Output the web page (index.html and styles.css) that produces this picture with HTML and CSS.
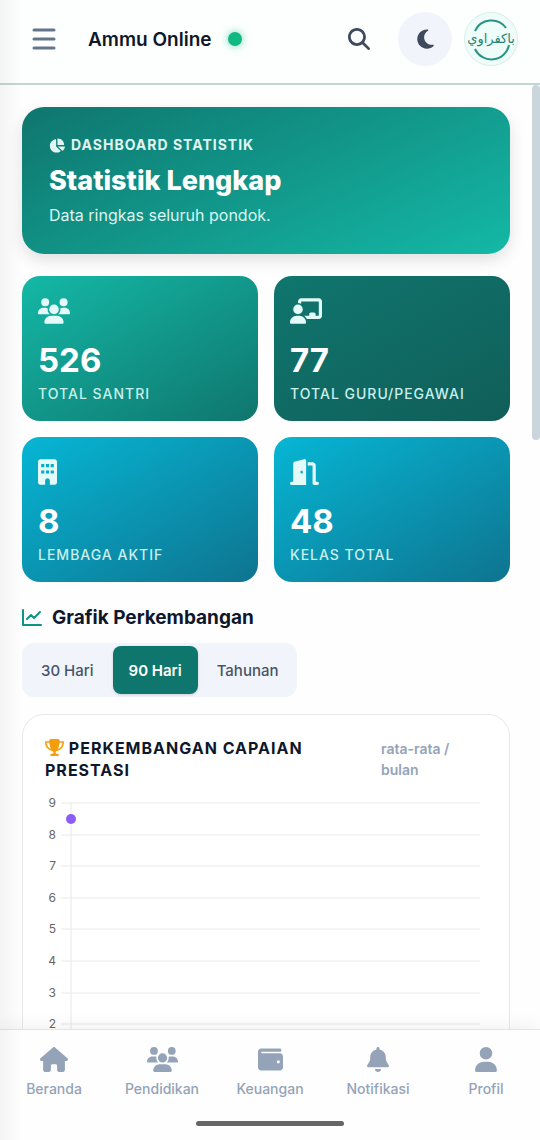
FILE: index.html
```html
<!DOCTYPE html>
<html lang="id">
<head>
  <meta charset="UTF-8">
  <meta name="viewport" content="width=device-width, initial-scale=1.0">
  <title>Ammu Online - Dashboard Statistik</title>
  <link rel="stylesheet" href="styles.css">
</head>
<body>
  <header class="topbar">
    <button class="menu-btn" aria-label="Buka menu">
      <svg viewBox="0 0 24 22" width="24" height="22"><path d="M2 2H22M2 11H22M2 20H22" stroke="currentColor" stroke-width="3" stroke-linecap="round"/></svg>
    </button>
    <div class="brand">Ammu Online <span class="status-dot"></span></div>
    <div class="topbar-actions">
      <button class="round-btn" aria-label="Cari">
        <svg viewBox="0 0 512 512" width="22" height="22"><path d="M416 208c0 45.9-14.9 88.3-40 122.7L502.6 457.4c12.5 12.5 12.5 32.8 0 45.3s-32.8 12.5-45.3 0L330.7 376c-34.4 25.2-76.8 40-122.7 40C93.1 416 0 322.9 0 208S93.1 0 208 0S416 93.1 416 208zM208 352a144 144 0 1 0 0-288 144 144 0 1 0 0 288z"/></svg>
      </button>
      <button class="round-btn filled" aria-label="Mode gelap">
        <svg viewBox="0 0 384 512" width="17" height="22"><path d="M223.5 32C100 32 0 132.3 0 256S100 480 223.5 480c60.6 0 115.5-24.2 155.8-63.4c5-4.9 6.3-12.5 3.1-18.7s-10.1-9.7-17-8.5c-9.8 1.7-19.8 2.6-30.1 2.6c-96.9 0-175.5-78.8-175.5-176c0-65.8 36-123.1 89.3-153.3c6.1-3.5 9.2-10.5 7.7-17.3s-7.3-11.9-14.3-12.5c-6.3-.5-12.6-.8-19-.8z"/></svg>
      </button>
      <a href="#profil" class="avatar" aria-label="Profil">
        <svg viewBox="0 0 54 54" width="54" height="54">
          <path d="M11 19A18 18 0 0 1 42 16M11 37A18 18 0 0 0 45 33" fill="none" stroke="#2a9483" stroke-width="2"/>
          <text x="27" y="31" text-anchor="middle" class="avatar-text">باكفراوي</text>
        </svg>
      </a>
    </div>
  </header>

  <div class="scroller">
    <main class="content">
      <section class="hero">
        <p class="hero-label">
          <svg viewBox="0 0 576 512" width="16" height="15"><path d="M304 240V16.6c0-9 7-16.6 16-16.6C443.7 0 544 100.3 544 224c0 9-7.6 16-16.6 16H304zM32 272C32 150.7 122.1 50.3 239 34.3c9.2-1.3 17 6.1 17 15.4V288L412.5 444.5c6.7 6.7 6.2 17.7-1.5 23.1C371.8 495.6 323.8 512 272 512C139.5 512 32 404.6 32 272zm526.4 16c9.3 0 16.6 7.8 15.4 17c-7.7 55.9-34.6 105.6-73.9 142.3c-6 5.6-15.4 5.2-21.2-.7L320 288H558.4z"/></svg>
          DASHBOARD STATISTIK
        </p>
        <h1>Statistik Lengkap</h1>
        <p class="hero-desc">Data ringkas seluruh pondok.</p>
      </section>

      <section class="stats">
        <div class="stat santri">
          <div class="stat-icon"><svg viewBox="0 0 640 512" width="32" height="26"><path d="M144 0a80 80 0 1 1 0 160A80 80 0 1 1 144 0zM512 0a80 80 0 1 1 0 160A80 80 0 1 1 512 0zM0 298.7C0 239.8 47.8 192 106.7 192h42.7c15.9 0 31 3.5 44.6 9.7c-1.3 7.2-1.9 14.7-1.9 22.3c0 38.2 16.8 72.5 43.3 96c-.2 0-.4 0-.7 0H21.3C9.6 320 0 310.4 0 298.7zM405.3 320c-.2 0-.4 0-.7 0c26.6-23.5 43.3-57.8 43.3-96c0-7.6-.7-15-1.9-22.3c13.6-6.3 28.7-9.7 44.6-9.7h42.7C592.2 192 640 239.8 640 298.7c0 11.8-9.6 21.3-21.3 21.3H405.3zM224 224a96 96 0 1 1 192 0 96 96 0 1 1 -192 0zM128 485.3C128 411.7 187.7 352 261.3 352H378.7C452.3 352 512 411.7 512 485.3c0 14.7-11.9 26.7-26.7 26.7H154.7c-14.7 0-26.7-11.9-26.7-26.7z"/></svg></div>
          <strong>526</strong>
          <span>TOTAL SANTRI</span>
        </div>
        <div class="stat guru">
          <div class="stat-icon"><svg viewBox="0 0 640 512" width="32" height="26"><path d="M160 64c0-35.3 28.7-64 64-64H576c35.3 0 64 28.7 64 64V352c0 35.3-28.7 64-64 64H336.8c-11.8-25.5-29.9-47.5-52.4-64H384V320c0-17.7 14.3-32 32-32h64c17.700 0 32 14.300 32 32v32h64V64L224 64v49.100C205.200 102.200 183.300 96 160 96V64zm0 64a96 96 0 1 1 0 192 96 96 0 1 1 0-192zM133.300 352h53.300C260.300 352 320 411.700 320 485.300c0 14.700-11.900 26.700-26.700 26.700H26.700C11.900 512 0 500.100 0 485.300C0 411.700 59.700 352 133.300 352z"/></svg></div>
          <strong>77</strong>
          <span>TOTAL GURU/PEGAWAI</span>
        </div>
        <div class="stat lembaga">
          <div class="stat-icon"><svg viewBox="0 0 384 512" width="19" height="26"><path fill-rule="evenodd" d="M48 0C21.500 0 0 21.500 0 48V464c0 26.500 21.500 48 48 48h96V432c0-26.500 21.500-48 48-48s48 21.500 48 48v80h96c26.500 0 48-21.500 48-48V48c0-26.500-21.500-48-48-48H48zM64 96h64v64H64zM160 96h64v64h-64zM256 96h64v64h-64zM64 224h64v64H64zM160 224h64v64h-64zM256 224h64v64h-64z"/></svg></div>
          <strong>8</strong>
          <span>LEMBAGA AKTIF</span>
        </div>
        <div class="stat kelas">
          <div class="stat-icon"><svg viewBox="0 0 576 512" width="29" height="26"><path d="M320 32c0-9.900-4.500-19.200-12.300-25.200S289.800-1.400 280.200 1l-179.900 45C79 51.300 64 70.500 64 92.500V448H32c-17.700 0-32 14.300-32 32s14.300 32 32 32H96 288h32V480 32zM256 256c0 17.700-10.700 32-24 32s-24-14.300-24-32s10.700-32 24-32s24 14.300 24 32zm96-128h96V480c0 17.700 14.300 32 32 32h64c17.700 0 32-14.300 32-32s-14.300-32-32-32H512V128c0-35.300-28.700-64-64-64H352v64z"/></svg></div>
          <strong>48</strong>
          <span>KELAS TOTAL</span>
        </div>
      </section>

      <h2 class="section-title">
        <svg viewBox="0 0 20 18" width="20" height="18"><path d="M1 1V16H19M5 10L9 6L12 9L18 3" fill="none" stroke="currentColor" stroke-width="2" stroke-linecap="round" stroke-linejoin="round"/></svg>
        Grafik Perkembangan
      </h2>

      <div class="range-tabs">
        <button>30 Hari</button>
        <button class="active">90 Hari</button>
        <button>Tahunan</button>
      </div>

      <section class="chart-card">
        <div class="chart-head">
          <h3><svg viewBox="0 0 576 512" width="19" height="17"><path d="M400 0H176c-26.500 0-48.100 21.800-47.100 48.200c.2 5.300 .4 10.600 .7 15.800H24C10.700 64 0 74.700 0 88c0 92.600 33.500 157 78.500 200.700c44.300 43.100 98.300 64.800 138.100 75.800c23.400 6.500 39.400 26 39.400 45.600c0 20.900-17 37.900-37.900 37.900H192c-17.700 0-32 14.300-32 32s14.300 32 32 32H384c17.700 0 32-14.300 32-32s-14.300-32-32-32H357.900C337 448 320 431 320 410.100c0-19.600 15.900-39.200 39.400-45.600c39.900-11 93.900-32.700 138.200-75.800C542.500 245 576 180.600 576 88c0-13.300-10.700-24-24-24H446.400c.3-5.200 .5-10.400 .7-15.800C448.100 21.800 426.500 0 400 0zM48.900 112h84.400c9.100 90.100 29.200 150.300 51.900 190.600c-24.900-11-50.800-26.500-73.200-48.300c-32-31.100-58-76-63-142.300zM464.100 254.300c-22.400 21.800-48.300 37.300-73.200 48.300c22.700-40.300 42.800-100.500 51.900-190.600h84.400c-5.100 66.300-31.100 111.200-63 142.300z"/></svg> PERKEMBANGAN CAPAIAN PRESTASI</h3>
          <span>rata-rata / bulan</span>
        </div>
        <svg class="chart" viewBox="0 0 442 250" role="img" aria-label="Grafik perkembangan capaian prestasi">
          <path class="grid" d="M16 13H435M16 45H435M16 76H435M16 108H435M16 139H435M16 171H435M16 203H435M16 234H435M26 13V250"/>
          <g class="axis">
            <text x="11" y="17">9</text>
            <text x="11" y="49">8</text>
            <text x="11" y="80">7</text>
            <text x="11" y="112">6</text>
            <text x="11" y="143">5</text>
            <text x="11" y="175">4</text>
            <text x="11" y="207">3</text>
            <text x="11" y="238">2</text>
          </g>
          <circle cx="26" cy="29" r="5" fill="#8b5cf6"/>
        </svg>
      </section>
    </main>
    <div class="scroll-thumb"></div>
  </div>

  <nav class="bottom-nav">
    <div class="nav-items">
      <a href="#beranda">
        <svg viewBox="0 0 576 512" width="28" height="25"><path d="M575.8 255.5c0 18-15 32.100-32 32.100h-32l.7 160.200c0 2.700-.2 5.400-.5 8.100V472c0 22.100-17.900 40-40 40H456c-1.100 0-2.200 0-3.300-.1c-1.400 .1-2.800 .1-4.200 .1H416 392c-22.100 0-40-17.900-40-40V448 384c0-17.700-14.300-32-32-32H256c-17.700 0-32 14.300-32 32v64 24c0 22.100-17.900 40-40 40H160 128.100c-1.500 0-3-.1-4.500-.2c-1.200 .1-2.400 .2-3.600 .2H104c-22.100 0-40-17.900-40-40V360c0-.9 0-1.900 .1-2.800V287.600H32c-18 0-32-14-32-32.100c0-9 3-17 10-24L266.400 8c7-7 15-8 22-8s15 2 21 7L564.800 231.500c8 7 12 15 11 24z"/></svg>
        Beranda
      </a>
      <a href="#pendidikan">
        <svg viewBox="0 0 640 512" width="31" height="25"><path d="M144 0a80 80 0 1 1 0 160A80 80 0 1 1 144 0zM512 0a80 80 0 1 1 0 160A80 80 0 1 1 512 0zM0 298.7C0 239.8 47.8 192 106.7 192h42.7c15.9 0 31 3.5 44.6 9.7c-1.3 7.2-1.9 14.7-1.9 22.3c0 38.2 16.8 72.5 43.3 96c-.2 0-.4 0-.7 0H21.3C9.6 320 0 310.4 0 298.7zM405.3 320c-.2 0-.4 0-.7 0c26.6-23.5 43.3-57.8 43.3-96c0-7.6-.7-15-1.9-22.3c13.6-6.3 28.7-9.7 44.6-9.7h42.7C592.2 192 640 239.8 640 298.7c0 11.8-9.6 21.3-21.3 21.3H405.3zM224 224a96 96 0 1 1 192 0 96 96 0 1 1 -192 0zM128 485.3C128 411.7 187.7 352 261.3 352H378.7C452.3 352 512 411.7 512 485.3c0 14.7-11.9 26.7-26.7 26.7H154.7c-14.7 0-26.7-11.9-26.7-26.7z"/></svg>
        Pendidikan
      </a>
      <a href="#keuangan">
        <svg viewBox="0 0 512 512" width="25" height="25"><path fill-rule="evenodd" d="M64 32C28.700 32 0 60.700 0 96V416c0 35.300 28.700 64 64 64H448c35.300 0 64-28.700 64-64V192c0-35.300-28.700-64-64-64H80c-8.800 0-16-7.200-16-16s7.200-16 16-16H448c17.700 0 32-14.300 32-32s-14.300-32-32-32H64zM416 272a32 32 0 1 1 0 64 32 32 0 1 1 0-64z"/></svg>
        Keuangan
      </a>
      <a href="#notifikasi">
        <svg viewBox="0 0 448 512" width="22" height="25"><path d="M224 0c-17.700 0-32 14.300-32 32V51.200C119 66 64 130.600 64 208v18.800c0 47-17.300 92.400-48.500 127.600l-7.400 8.300c-8.400 9.400-10.400 22.900-5.300 34.400S19.400 416 32 416H416c12.600 0 24-7.400 29.200-18.900s3.100-25-5.300-34.400l-7.400-8.300C401.300 319.200 384 273.900 384 226.800V208c0-77.400-55-142-128-156.800V32c0-17.700-14.300-32-32-32zm45.300 493.300c12-12 18.700-28.300 18.700-45.300H224 160c0 17 6.700 33.300 18.700 45.300s28.300 18.700 45.300 18.700s33.300-6.700 45.300-18.700z"/></svg>
        Notifikasi
      </a>
      <a href="#profil">
        <svg viewBox="0 0 448 512" width="22" height="25"><path d="M224 256A128 128 0 1 0 224 0a128 128 0 1 0 0 256zm-45.700 48C79.800 304 0 383.800 0 482.300C0 498.700 13.300 512 29.700 512H418.300c16.400 0 29.700-13.300 29.700-29.700C448 383.800 368.200 304 269.700 304H178.300z"/></svg>
        Profil
      </a>
    </div>
    <div class="home-bar"></div>
  </nav>
</body>
</html>
```

FILE: styles.css
```css
* {
  box-sizing: border-box;
}
body {
  margin: 0;
  height: 100vh;
  display: flex;
  flex-direction: column;
  overflow: hidden;
  font-family: 'Inter', 'Open Sans', sans-serif;
  background: #fefefe;
  color: #0f172a;
}
/* soft shadow of the closed side drawer */
body::before {
  content: "";
  position: fixed;
  top: 0;
  bottom: 0;
  left: 0;
  width: 22px;
  background: linear-gradient(to right, rgba(0,0,0,0.04), transparent);
  pointer-events: none;
  z-index: 10;
}
h1, h2, h3, p {
  margin: 0;
}
button {
  font-family: inherit;
  border: none;
  padding: 0;
  background: none;
  cursor: pointer;
}
a {
  text-decoration: none;
}
svg {
  fill: currentColor;
}

.topbar {
  display: flex;
  align-items: center;
  padding: 12px 22px 17px;
  border-bottom: 2px solid #c3d6d3;
  background: #fdfffe;
}
.menu-btn {
  display: grid;
  place-items: center;
  width: 44px;
  height: 44px;
  color: #64748b;
}
.brand {
  display: flex;
  align-items: center;
  gap: 16px;
  margin-left: 22px;
  font-size: 19px;
  font-weight: 600;
}
.status-dot {
  width: 14px;
  height: 14px;
  border-radius: 50%;
  background: #10b981;
  box-shadow: 0 0 8px rgba(16,185,129,0.6);
}
.topbar-actions {
  display: flex;
  gap: 12px;
  margin-left: auto;
}
.round-btn {
  display: grid;
  place-items: center;
  width: 54px;
  height: 54px;
  border-radius: 50%;
  color: #3f4a5c;
}
.round-btn.filled {
  background: #f1f4fa;
}
.avatar {
  width: 54px;
  height: 54px;
  border-radius: 50%;
  background: #effdfa;
  box-shadow: 0 0 0 1px #dceee9 inset;
  color: #1f8577;
}
.avatar-text {
  font-family: 'DejaVu Sans', sans-serif;
  font-size: 13px;
}

.scroller {
  position: relative;
  flex: 1;
  min-height: 0;
}
.content {
  height: 100%;
  overflow-y: auto;
  scrollbar-width: none;
  padding: 22px 30px 22px 22px;
}
.scroll-thumb {
  position: absolute;
  top: 0;
  right: 0;
  width: 8px;
  height: 355px;
  border-radius: 4px;
  background: #cbd5dc;
}

.hero {
  padding: 28px 27px;
  border-radius: 22px;
  background: linear-gradient(155deg, #0f766e, #14b8a6);
  box-shadow: 0 6px 16px rgba(0,0,0,0.12);
  color: white;
}
.hero-label {
  display: flex;
  align-items: center;
  gap: 6px;
  font-size: 14px;
  line-height: 20px;
  font-weight: 700;
  letter-spacing: 1px;
  color: #e0f5f2;
}
.hero h1 {
  margin: 8px 0 5px;
  font-size: 27px;
  line-height: 36px;
  font-weight: 800;
}
.hero-desc {
  font-size: 16px;
  line-height: 22px;
  color: #dcf5f1;
}

.stats {
  display: grid;
  grid-template-columns: 1fr 1fr;
  gap: 16px;
  margin-top: 22px;
}
.stat {
  display: flex;
  flex-direction: column;
  padding: 20px 16px 17px;
  border-radius: 18px;
  color: white;
}
.stat-icon {
  display: flex;
  align-items: center;
  height: 30px;
  margin-bottom: 16px;
  color: #e3faf8;
}
.stat strong {
  font-size: 33px;
  line-height: 36px;
  font-weight: 700;
}
.stat span {
  margin-top: 6px;
  font-size: 14px;
  line-height: 20px;
  font-weight: 500;
  letter-spacing: 1px;
  color: #c9efec;
}
.santri {
  background: linear-gradient(150deg, #14b8a6, #0f766e);
}
.guru {
  background: linear-gradient(150deg, #0f766e, #115e59);
}
.lembaga, .kelas {
  background: linear-gradient(150deg, #06b6d4, #0e7490);
}

.section-title {
  display: flex;
  align-items: center;
  gap: 10px;
  margin: 22px 0 11px;
  font-size: 19px;
  line-height: 28px;
  font-weight: 700;
}
.section-title svg {
  color: #0d9482;
}
.range-tabs {
  display: inline-flex;
  vertical-align: top;
  gap: 3px;
  padding: 3px;
  border-radius: 12px;
  background: #f1f4fa;
}
.range-tabs button {
  height: 48px;
  padding: 0 16px;
  border-radius: 8px;
  font-size: 15px;
  font-weight: 500;
  color: #475569;
}
.range-tabs .active {
  background: #0f766e;
  color: white;
  font-weight: 600;
  box-shadow: 0 1px 3px rgba(0,0,0,0.15);
}

.chart-card {
  margin-top: 17px;
  padding: 22px;
  border: 1px solid #e5e8eb;
  border-radius: 22px;
  background: white;
}
.chart-head {
  display: grid;
  grid-template-columns: 1fr 106px;
  align-items: center;
}
.chart-head h3 {
  font-size: 16px;
  line-height: 22px;
  font-weight: 700;
  letter-spacing: 1px;
}
.chart-head h3 svg {
  vertical-align: -2px;
}
.chart-head h3 svg {
  color: #f59e0b;
}
.chart-head span {
  font-size: 14px;
  line-height: 21px;
  font-weight: 600;
  color: #94a3b8;
}
.chart {
  display: block;
  width: 100%;
  margin-top: 9px;
}
.grid {
  fill: none;
  stroke: #e8e8e8;
}
.axis {
  font-size: 12px;
  fill: #666;
  text-anchor: end;
}

.bottom-nav {
  position: relative;
  padding: 17px 0 14px;
  border-top: 1px solid #e2e5e8;
  background: #fefefe;
  box-shadow: 0 -4px 16px rgba(0,0,0,0.05);
}
.nav-items {
  display: grid;
  grid-template-columns: repeat(5, 1fr);
}
.nav-items a {
  display: flex;
  flex-direction: column;
  align-items: center;
  gap: 7px;
  font-size: 14px;
  line-height: 20px;
  font-weight: 500;
  color: #94a3b8;
}
.home-bar {
  width: 148px;
  height: 5px;
  margin: 22px auto 0;
  border-radius: 3px;
  background: #666;
}
```
